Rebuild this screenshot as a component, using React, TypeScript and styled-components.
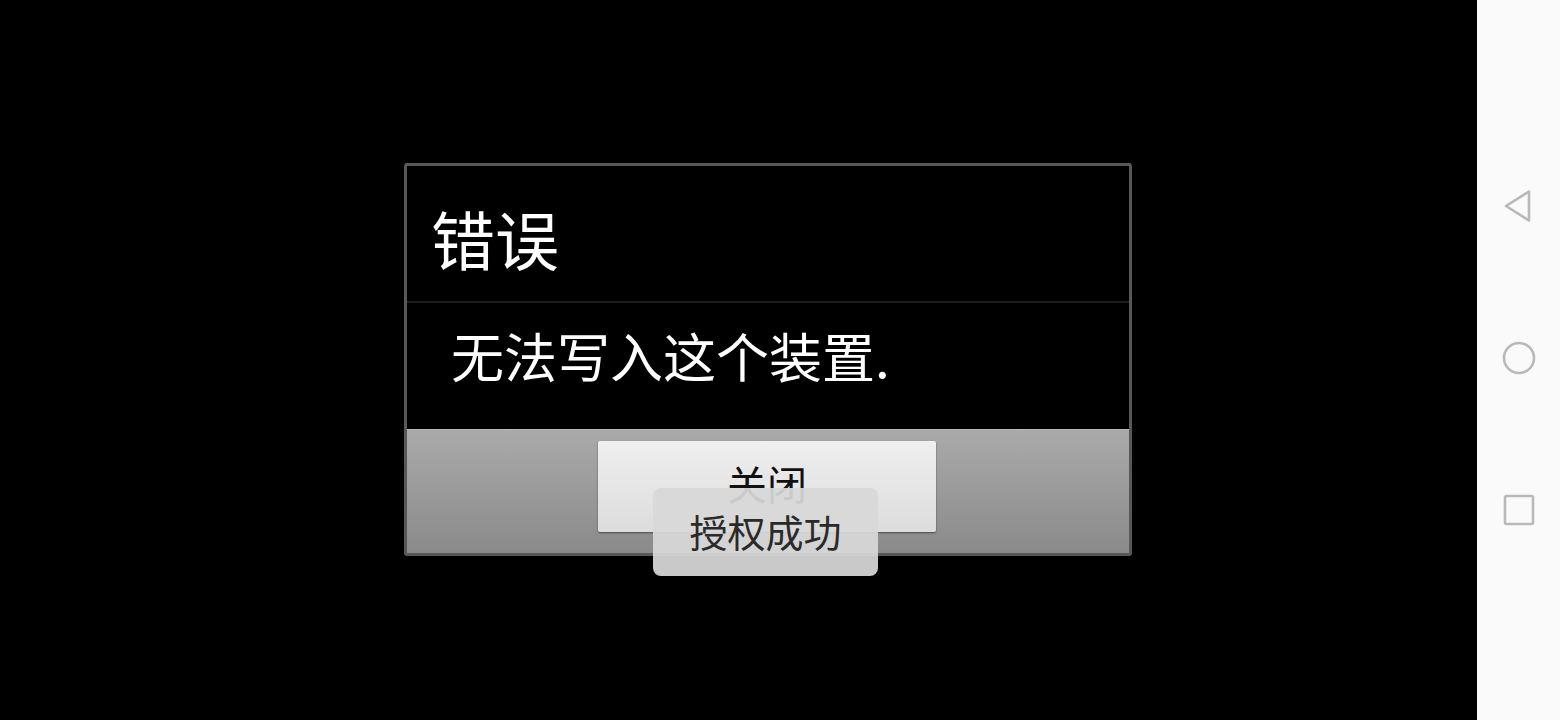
import React from "react";
import styled, { createGlobalStyle } from "styled-components";

const Global = createGlobalStyle`
  html, body { margin: 0; padding: 0; background: #000; }
  body { font-family: "Noto Sans CJK SC", "Noto Sans", sans-serif; }
`;

const Screen = styled.div`
  display: flex;
  width: 1560px;
  height: 720px;
  overflow: hidden;
`;

const Main = styled.div`
  position: relative;
  flex: 1;
  background: #000;
  display: flex;
  align-items: flex-start;
  padding: 163px 0 0 404px;
  box-sizing: border-box;
`;

const Dialog = styled.div`
  width: 728px;
  height: 393px;
  box-sizing: border-box;
  border: 3px solid #585858;
  border-radius: 3px;
  background: #000;
  display: flex;
  flex-direction: column;
`;

const TitleBar = styled.div`
  height: 137px;
  display: flex;
  align-items: center;
  padding-left: 24px;
  border-bottom: 2px solid #1c1c1c;
  color: #fff;
  font-size: 64px;
  line-height: 1;
  padding-top: 6px;
  box-sizing: border-box;
`;

const Message = styled.div`
  height: 126px;
  display: flex;
  align-items: center;
  padding-left: 44px;
  padding-bottom: 22px;
  box-sizing: border-box;
  color: #fff;
  font-size: 53px;
  line-height: 1;
`;

const ButtonBar = styled.div`
  flex: 1;
  display: flex;
  justify-content: center;
  align-items: flex-start;
  padding-top: 11px;
  padding-right: 2px;
  border-top: 1px solid #b8b8b8;
  background: linear-gradient(#aaaaaa, #8a8a8a);
`;

const Button = styled.div`
  width: 338px;
  height: 91px;
  box-sizing: border-box;
  border-radius: 2px;
  background: linear-gradient(#efefef, #dcdcdc);
  box-shadow: 0 1px 2px rgba(0, 0, 0, 0.5);
  display: flex;
  justify-content: center;
  padding-top: 22px;
  color: #111;
  font-size: 40px;
  line-height: 1;
`;

const Toast = styled.div`
  position: absolute;
  left: 653px;
  top: 488px;
  width: 225px;
  height: 88px;
  box-sizing: border-box;
  border-radius: 8px;
  background: rgba(216, 216, 216, 0.93);
  color: #2a2a2a;
  font-size: 38px;
  line-height: 1;
  display: flex;
  justify-content: center;
  align-items: center;
  padding-bottom: 2px;
`;

const NavBar = styled.div`
  width: 83px;
  background: #fafafa;
  display: flex;
  flex-direction: column;
  align-items: center;
  justify-content: space-between;
  padding: 188px 0 192px;
  box-sizing: border-box;
`;

const NavIcon = styled.svg`
  width: 36px;
  height: 36px;
  display: block;
`;

export default function App() {
  return (
    <>
      <Global />
      <Screen>
        <Main>
          <Dialog>
            <TitleBar>错误</TitleBar>
            <Message>无法写入这个装置.</Message>
            <ButtonBar>
              <Button>关闭</Button>
            </ButtonBar>
          </Dialog>
          <Toast>授权成功</Toast>
        </Main>
        <NavBar>
          <NavIcon viewBox="0 0 36 36">
            <path
              d="M28 3.5 L28 32.5 L5 18 Z"
              fill="none"
              stroke="#b9b9b9"
              strokeWidth="2.6"
              strokeLinejoin="round"
            />
          </NavIcon>
          <NavIcon viewBox="0 0 36 36">
            <circle cx="18" cy="18" r="15" fill="none" stroke="#b9b9b9" strokeWidth="2.6" />
          </NavIcon>
          <NavIcon viewBox="0 0 36 36">
            <rect x="4" y="4" width="28" height="28" rx="1.5" fill="none" stroke="#b9b9b9" strokeWidth="2.6" />
          </NavIcon>
        </NavBar>
      </Screen>
    </>
  );
}
